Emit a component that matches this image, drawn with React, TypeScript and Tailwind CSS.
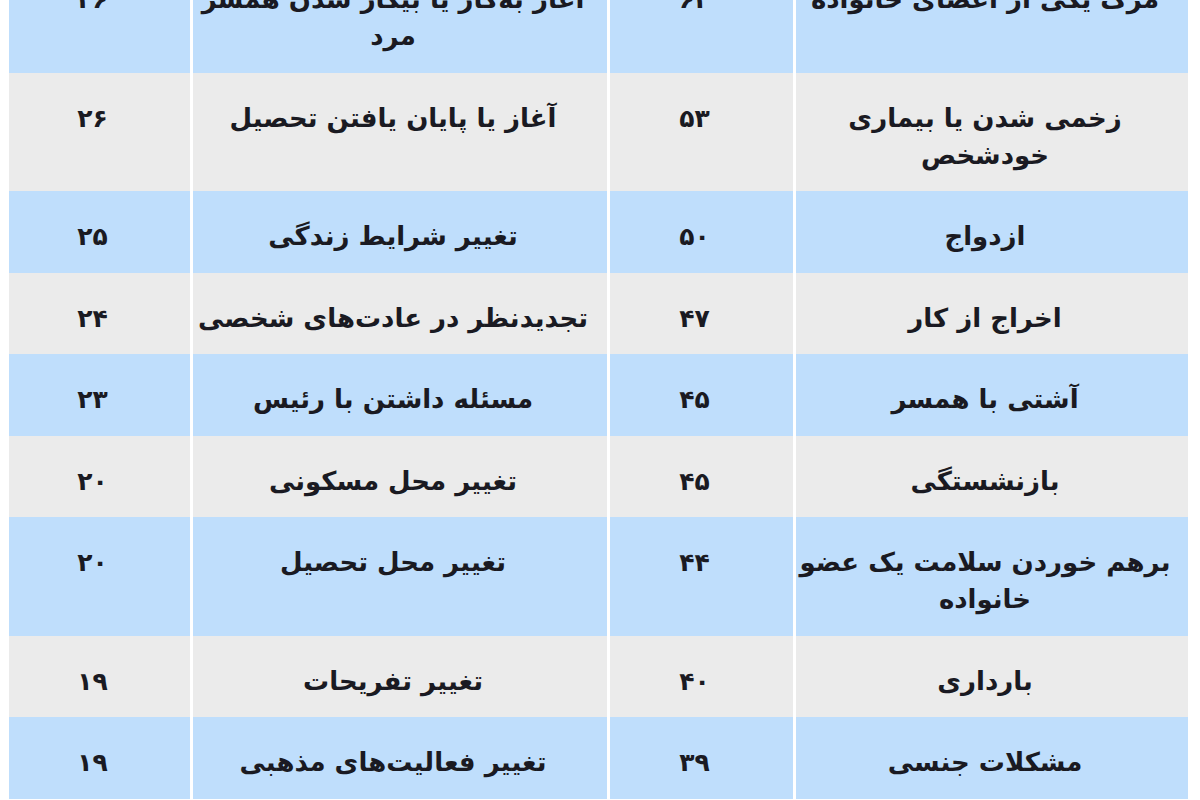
const rows: { a: string[]; b: string; c: string[]; d: string; blue: boolean }[] = [
  { a: ["مرگ یکی از اعضای خانواده"], b: "۶۳", c: ["آغاز به‌کار یا بیکار شدن همسر", "مرد"], d: "۲۶", blue: true },
  { a: ["زخمی شدن یا بیماری", "خودشخص"], b: "۵۳", c: ["آغاز یا پایان یافتن تحصیل"], d: "۲۶", blue: false },
  { a: ["ازدواج"], b: "۵۰", c: ["تغییر شرایط زندگی"], d: "۲۵", blue: true },
  { a: ["اخراج از کار"], b: "۴۷", c: ["تجدیدنظر در عادت‌های شخصی"], d: "۲۴", blue: false },
  { a: ["آشتی با همسر"], b: "۴۵", c: ["مسئله داشتن با رئیس"], d: "۲۳", blue: true },
  { a: ["بازنشستگی"], b: "۴۵", c: ["تغییر محل مسکونی"], d: "۲۰", blue: false },
  { a: ["برهم خوردن سلامت یک عضو", "خانواده"], b: "۴۴", c: ["تغییر محل تحصیل"], d: "۲۰", blue: true },
  { a: ["بارداری"], b: "۴۰", c: ["تغییر تفریحات"], d: "۱۹", blue: false },
  { a: ["مشکلات جنسی"], b: "۳۹", c: ["تغییر فعالیت‌های مذهبی"], d: "۱۹", blue: true },
];

function Cell({ lines, num, blue }: { lines: string[]; num?: boolean; blue: boolean }) {
  return (
    <div
      className={
        (blue ? "bg-[#bfdefc] " : "bg-[#ebebeb] ") +
        "pt-[27px] pb-[17.5px] pr-[14px] text-center leading-[37px] whitespace-nowrap font-bold text-[#1a1a22] " +
        (num ? "text-[25px]" : "text-[26px]")
      }
    >
      {lines.map((l, i) => (
        <div key={i}>{l}</div>
      ))}
    </div>
  );
}

export default function App() {
  return (
    <div className="h-[800px] w-[1200px] overflow-hidden bg-white">
      <div
        dir="rtl"
        className="mt-[-46px] mr-[12px] ml-[9px] grid grid-cols-[392px_183px_414px_181px] gap-x-[3px]"
        style={{ fontFamily: '"DejaVu Sans", Tahoma, sans-serif' }}
      >
        {rows.map((r, i) => (
          <div key={i} className="contents">
            <Cell lines={r.a} blue={r.blue} />
            <Cell lines={[r.b]} num blue={r.blue} />
            <Cell lines={r.c} blue={r.blue} />
            <Cell lines={[r.d]} num blue={r.blue} />
          </div>
        ))}
      </div>
    </div>
  );
}
